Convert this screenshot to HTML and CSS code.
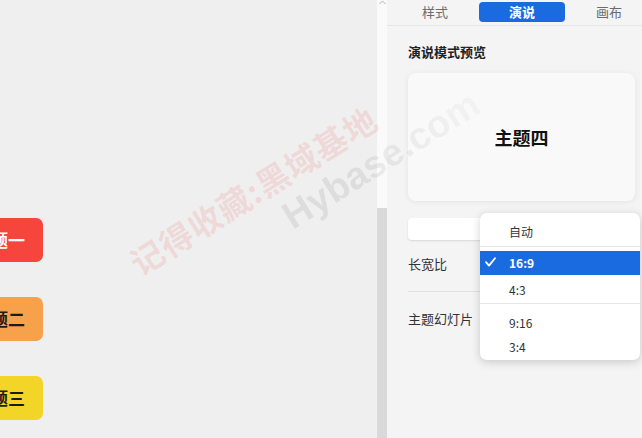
FILE: index.html
```html
<!DOCTYPE html>
<html lang="zh">
<head>
<meta charset="utf-8">
<link rel="stylesheet" href="styles.css">
</head>
<body>
<div class="canvas">
  <div class="nodes">
    <div class="node node-red">主题一</div>
    <div class="node node-orange">主题二</div>
    <div class="node node-yellow">主题三</div>
  </div>
</div>
<div class="scrollbar">
  <svg class="scroll-arrow" width="7" height="5" viewBox="0 0 7 5"><polyline points="0.5,4 3.5,1 6.5,4" fill="none" stroke="#b0b0b0" stroke-width="1"/></svg>
  <div class="scroll-thumb"></div>
</div>
<div class="panel">
  <div class="tabs">
    <div class="tab">样式</div>
    <div class="tab tab-active">演说</div>
    <div class="tab">画布</div>
  </div>
  <div class="panel-body">
    <div class="section-title">演说模式预览</div>
    <div class="preview-card">主题四</div>
    <div class="select-box"></div>
    <div class="row-label">长宽比</div>
    <div class="divider"></div>
    <div class="row-label row-label-2">主题幻灯片</div>
  </div>
</div>

<div class="dropdown">
  <div class="dd-item dd-first">自动</div>
  <div class="dd-sep dd-sep-1"></div>
  <div class="dd-item dd-selected">
    <svg class="dd-check" width="11" height="10" viewBox="0 0 11 10"><polyline points="1,5.2 4,8.6 10,1.2" fill="none" stroke="#ffffff" stroke-width="1.8" stroke-linecap="round" stroke-linejoin="round"/></svg>
    16:9
  </div>
  <div class="dd-item dd-gap">4:3</div>
  <div class="dd-sep dd-sep-2"></div>
  <div class="dd-item">9:16</div>
  <div class="dd-item">3:4</div>
</div>

<div class="watermark">
  <span class="wm wm-red">记得收藏:黑域基地</span>
  <span class="wm wm-gray">Hybase.com</span>
</div>
</body>
</html>
```

FILE: styles.css
```css
html, body {
  margin: 0;
  padding: 0;
}
body {
  width: 642px;
  height: 438px;
  overflow: hidden;
  display: flex;
  position: relative;
  font-family: "Noto Sans CJK SC", "Noto Sans", sans-serif;
  background: #efefef;
}

/* canvas */
.canvas {
  flex: none;
  width: 377px;
  height: 438px;
  background: #efefef;
  padding-top: 218px;
  box-sizing: border-box;
  overflow: hidden;
}
.nodes {
  display: flex;
  flex-direction: column;
  gap: 35px;
  margin-left: -44px;
  align-items: flex-start;
}
.node {
  height: 44px;
  line-height: 44px;
  padding: 0 18px;
  border-radius: 7px;
  font-size: 17px;
  font-weight: 700;
  color: #1b1b1b;
  white-space: nowrap;
}
.node-red { background: #f5453c; color: #ffffff; }
.node-orange { background: #f7a14b; }
.node-yellow { background: #f2d526; }

/* scrollbar */
.scrollbar {
  flex: none;
  width: 10px;
  height: 438px;
  background: #fafafa;
  display: flex;
  flex-direction: column;
  align-items: center;
}
.scroll-arrow {
  display: block;
}
.scroll-thumb {
  margin-top: 203px;
  width: 10px;
  flex: 1;
  background: #d9d9d9;
}

/* panel */
.panel {
  flex: none;
  width: 255px;
  height: 438px;
  background: #f4f4f4;
  overflow: hidden;
}
.tabs {
  width: 280px;
  height: 26px;
  box-sizing: border-box;
  border-bottom: 1px solid #e6e6e6;
  display: grid;
  grid-template-columns: repeat(3, 86px);
  column-gap: 1px;
  padding: 2px 0 0 5px;
}
.tab {
  height: 20px;
  line-height: 20px;
  text-align: center;
  font-size: 13px;
  color: #6b6b6b;
  border-radius: 4px;
}
.tab-active {
  background: #1a6be0;
  color: #ffffff;
  font-weight: 700;
}
.panel-body {
  padding: 17px 0 0 21px;
}
.section-title {
  font-size: 13px;
  line-height: 18px;
  font-weight: 700;
  color: #222222;
}
.preview-card {
  margin-top: 12px;
  width: 227px;
  height: 128px;
  background: #f9f9f9;
  border-radius: 8px;
  box-shadow: 0 1px 6px rgba(0, 0, 0, 0.07);
  display: flex;
  align-items: center;
  justify-content: center;
  font-size: 18px;
  font-weight: 700;
  color: #111111;
}
.select-box {
  margin-top: 17px;
  width: 227px;
  height: 22px;
  box-sizing: border-box;
  background: #ffffff;
  border-radius: 4px;
  box-shadow: 0 1px 2px rgba(0, 0, 0, 0.12);
}
.row-label {
  margin-top: 15px;
  font-size: 13px;
  line-height: 18px;
  color: #333333;
}
.divider {
  margin-top: 18px;
  width: 227px;
  height: 1px;
  background: #e2e2e2;
}
.row-label-2 {
  margin-top: 18px;
}

/* dropdown menu */
.dropdown {
  position: absolute;
  left: 480px;
  top: 213px;
  width: 160px;
  height: 147px;
  box-sizing: border-box;
  padding-top: 7px;
  background: #ffffff;
  border-radius: 7px;
  box-shadow: 0 2px 10px rgba(0, 0, 0, 0.18);
  display: flex;
  flex-direction: column;
  overflow: hidden;
}
.dd-item {
  position: relative;
  height: 24px;
  line-height: 24px;
  padding-left: 29px;
  font-size: 12px;
  color: #333333;
}
.dd-selected {
  background: #1a6be0;
  color: #ffffff;
  font-weight: 700;
}
.dd-check {
  position: absolute;
  left: 5px;
  top: 6px;
}
.dd-gap {
  margin-top: 3px;
}
.dd-sep {
  height: 1px;
  background: #e6e6e6;
}
.dd-sep-1 {
  margin: 2px 0 4px;
}
.dd-sep-2 {
  margin: 1px 0 7px;
}

/* watermark overlay */
.watermark {
  position: absolute;
  left: 0;
  top: 0;
  width: 642px;
  height: 438px;
  pointer-events: none;
  overflow: hidden;
}
.wm {
  position: absolute;
  white-space: nowrap;
  font-weight: 700;
  transform: translate(-50%, -50%) rotate(-32deg);
}
.wm-red {
  left: 253px;
  top: 190px;
  font-size: 33px;
  letter-spacing: 1px;
  color: rgba(235, 60, 60, 0.13);
  font-family: "Noto Sans CJK SC", sans-serif;
}
.wm-gray {
  left: 381px;
  top: 160px;
  font-size: 38px;
  color: rgba(0, 0, 0, 0.075);
  font-family: "Liberation Sans", Arial, sans-serif;
  -webkit-mask-image: linear-gradient(to right, #000 35%, rgba(0, 0, 0, 0.35) 100%);
  mask-image: linear-gradient(to right, #000 35%, rgba(0, 0, 0, 0.35) 100%);
}
```
